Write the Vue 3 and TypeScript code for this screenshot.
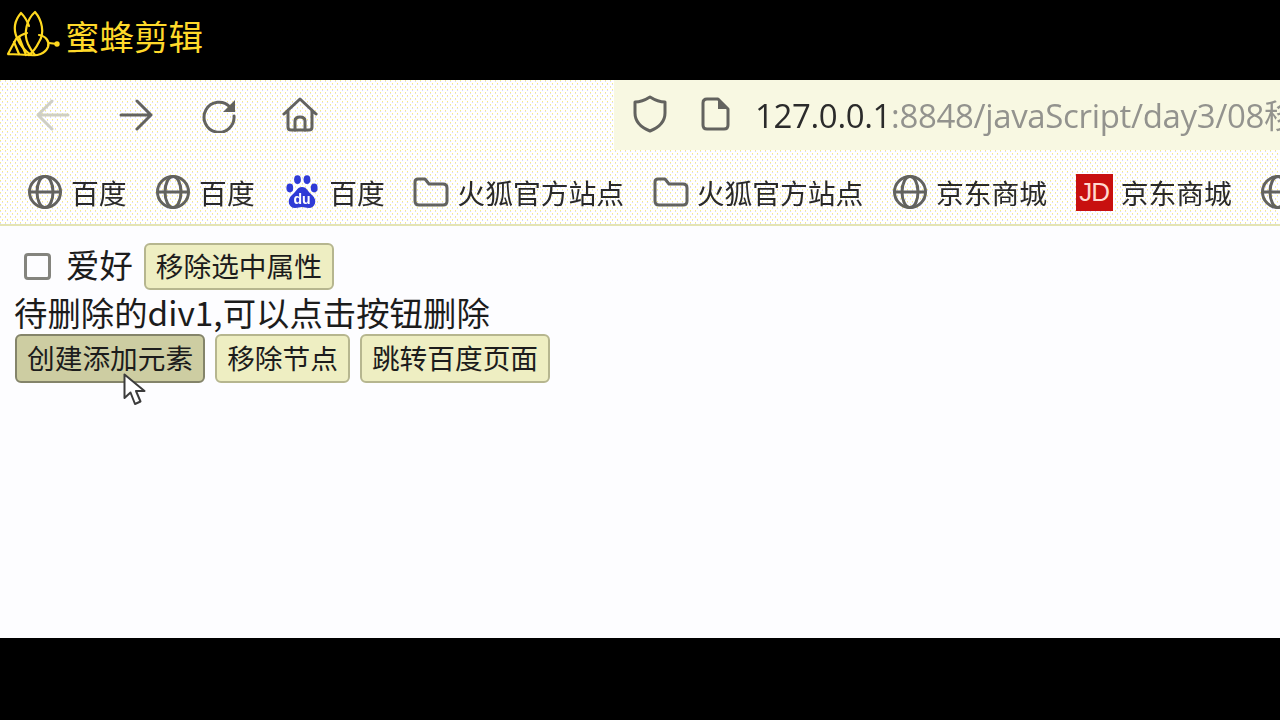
<template>
  <div class="screen">
    <header class="brand">
      <svg class="bee" viewBox="0 0 52 48" width="52" height="48" fill="none" stroke="#ffd91f" stroke-width="2.2" stroke-linejoin="round" stroke-linecap="round">
        <path d="M28 1 C20 8 16 22 21 33 C24 39 26 42 28 44 M28 1 C35 9 38 22 32 31 C29 37 26 41 22 44" />
        <path d="M14 2 C8 9 6 18 10 27 C13 34 18 40 24 44 M14 2 C17 5 20 9 22 15" />
        <path d="M32 24 C39 25 43 31 41 36 C38 43 30 45 24 44" />
        <path d="M1 43 L9 28 C12 25 16 23 20 22 M1 43 C9 43 17 44 24 44" />
        <path d="M7 31 L12 43 M12 26 L19 44" />
        <path d="M42 32 L50 33" />
        <circle cx="50" cy="33" r="1.6" fill="#ffd91f" />
      </svg>
      <span class="brand-name">蜜蜂剪辑</span>
    </header>

    <div class="toolbar">
      <div class="nav-icons">
        <svg class="nav-icon dim" viewBox="0 0 36 36" width="36" height="36">
          <path d="M33 18 H4 M17 4 L3 18 L17 32" />
        </svg>
        <svg class="nav-icon" viewBox="0 0 36 36" width="36" height="36">
          <path d="M3 18 H32 M19 4 L33 18 L19 32" />
        </svg>
        <svg class="nav-icon" viewBox="0 0 36 36" width="36" height="36">
          <path d="M29 10 A15 15 0 1 0 33 19" />
          <path class="solid" d="M34 3 V15 H22 Z" />
        </svg>
        <svg class="nav-icon home" viewBox="0 0 36 36" width="36" height="36">
          <path d="M2 17 L18 2 L34 17 M6 14 V30 Q6 33 9 33 H27 Q30 33 30 30 V14" />
          <path d="M13 33 V24 Q13 20 18 20 Q23 20 23 24 V33" />
        </svg>
      </div>
      <div class="address">
        <svg class="nav-icon shield" viewBox="0 0 34 38" width="34" height="38">
          <path d="M17 2 Q25 7 32 7 V18 Q32 30 17 36 Q2 30 2 18 V7 Q9 7 17 2 Z" />
        </svg>
        <svg class="nav-icon doc" viewBox="0 0 30 34" width="30" height="34">
          <path d="M7 2 H18 L28 12 V28 Q28 32 24 32 H7 Q3 32 3 28 V6 Q3 2 7 2 Z" />
          <path class="solid" d="M18 3 L27 12 H18 Z" />
        </svg>
        <span class="url"><span class="host">127.0.0.1</span>:8848/javaScript/day3/08移除节点</span>
      </div>
    </div>

    <nav class="bookmarks">
      <div v-for="(b, i) in bookmarks" :key="i" class="bookmark">
        <svg v-if="b.icon === 'globe'" class="nav-icon mark" viewBox="0 0 36 36" width="36" height="36">
          <circle cx="18" cy="18" r="15.5" />
          <ellipse cx="18" cy="18" rx="8" ry="15.5" />
          <path d="M3 18 H33" />
        </svg>
        <svg v-else-if="b.icon === 'folder'" class="nav-icon mark folder" viewBox="0 0 36 30" width="36" height="30">
          <path d="M5 2 H12 L16 7 H30 Q34 7 34 11 V24 Q34 28 30 28 H6 Q2 28 2 24 V5 Q2 2 5 2 Z" />
        </svg>
        <svg v-else-if="b.icon === 'baidu'" class="mark paw" viewBox="0 0 32 34" width="32" height="34">
          <ellipse cx="3.8" cy="13" rx="3.4" ry="4.4" />
          <ellipse cx="11.5" cy="4.6" rx="3.4" ry="4.4" />
          <ellipse cx="21" cy="4.6" rx="3.4" ry="4.4" />
          <ellipse cx="28.2" cy="13" rx="3.4" ry="4.4" />
          <path d="M16 12 C21 12 22 17 26 20 C32 25 29 33 23 33 C20 33 18 32 16 32 C14 32 12 33 9 33 C3 33 0 25 6 20 C10 17 11 12 16 12 Z" />
          <text x="16" y="29" text-anchor="middle" class="du">du</text>
        </svg>
        <span v-else class="jd">JD</span>
        <span class="bookmark-name">{{ b.name }}</span>
      </div>
    </nav>

    <main class="page">
      <div class="row hobby">
        <input class="check" type="checkbox" />
        <span class="hobby-label">爱好</span>
        <button class="btn">移除选中属性</button>
      </div>
      <div class="line">待删除的div1,可以点击按钮删除</div>
      <div class="row actions">
        <button class="btn pressed">创建添加元素</button>
        <button class="btn">移除节点</button>
        <button class="btn">跳转百度页面</button>
      </div>
      <svg class="cursor" viewBox="0 0 24 33" width="24" height="33">
        <path d="M1.5 1.5 V25 L7.5 19.5 L12 31 L17.5 28.5 L13 18 H21.5 Z" fill="#fff" stroke="#3c3c3c" stroke-width="2" stroke-linejoin="round" />
      </svg>
    </main>

    <footer class="foot"></footer>
  </div>
</template>

<script setup lang="ts">
interface Bookmark {
  icon: 'globe' | 'folder' | 'baidu' | 'jd'
  name: string
}

const bookmarks: Bookmark[] = [
  { icon: 'globe', name: '百度' },
  { icon: 'globe', name: '百度' },
  { icon: 'baidu', name: '百度' },
  { icon: 'folder', name: '火狐官方站点' },
  { icon: 'folder', name: '火狐官方站点' },
  { icon: 'globe', name: '京东商城' },
  { icon: 'jd', name: '京东商城' },
  { icon: 'globe', name: '京东商城' }
]
</script>

<style>
body {
  background: #000;
}
</style>

<style scoped>
.screen {
  width: 1280px;
  height: 720px;
  display: flex;
  flex-direction: column;
  overflow: hidden;
  background: #000;
  font-family: "Noto Sans CJK SC", "Liberation Sans", sans-serif;
  color: #1c1c1c;
}

.brand {
  height: 80px;
  flex: none;
  display: flex;
  align-items: flex-start;
  box-sizing: border-box;
  padding: 11px 0 0 7px;
  background: #000;
}

.bee {
  flex: none;
  overflow: visible;
}

.brand-name {
  margin: -1px 0 0 6px;
  font-size: 34.5px;
  line-height: 50px;
  font-weight: 400;
  color: #ffd92a;
}

.toolbar {
  height: 70px;
  flex: none;
  display: flex;
  background-color: #fff;
  background-image:
    radial-gradient(circle at 0.5px 0.5px, #fff27a 0.75px, transparent 0.75px),
    radial-gradient(circle at 0.5px 0.5px, #fff27a 0.75px, transparent 0.75px),
    radial-gradient(circle at 0.5px 0.5px, #d4d4ff 0.75px, transparent 0.75px),
    radial-gradient(circle at 0.5px 0.5px, #d4d4ff 0.75px, transparent 0.75px);
  background-size: 5px 6px;
  background-position: 0 0, 2px 3px, 0 1px, 2px 4px;
}

.nav-icons {
  display: flex;
  align-items: center;
  gap: 47px;
  padding: 0 0 0 35px;
}

.home {
  margin-left: -2px;
}

.nav-icon {
  flex: none;
  fill: none;
  stroke: #63635f;
  stroke-width: 3;
  stroke-linecap: round;
  stroke-linejoin: round;
  filter: blur(0.4px);
}

.nav-icon .solid {
  fill: #63635f;
  stroke: none;
}

.nav-icon.dim {
  stroke: #cfcfc4;
}

.address {
  margin-left: auto;
  width: 666px;
  display: flex;
  align-items: center;
  box-sizing: border-box;
  padding-left: 19px;
  overflow: hidden;
  white-space: nowrap;
  background: #f8f8e2;
}

.shield {
  margin-top: -2px;
}

.doc {
  margin: -2px 0 0 33px;
}

.url {
  margin: -3px 0 0 25px;
  font-family: "Open Sans", "Noto Sans CJK SC", sans-serif;
  font-size: 33px;
  letter-spacing: -0.35px;
  color: #93938e;
  filter: blur(0.4px);
}

.host {
  color: #2b2b2b;
}

.bookmarks {
  height: 76px;
  flex: none;
  box-sizing: border-box;
  display: flex;
  align-items: center;
  gap: 28.5px;
  padding: 9px 0 0 27px;
  white-space: nowrap;
  background-color: #fff;
  background-image:
    radial-gradient(circle at 0.5px 0.5px, #fff27a 0.75px, transparent 0.75px),
    radial-gradient(circle at 0.5px 0.5px, #fff27a 0.75px, transparent 0.75px),
    radial-gradient(circle at 0.5px 0.5px, #d4d4ff 0.75px, transparent 0.75px),
    radial-gradient(circle at 0.5px 0.5px, #d4d4ff 0.75px, transparent 0.75px);
  background-size: 5px 6px;
  background-position: 0 0, 2px 3px, 0 1px, 2px 4px;
  border-bottom: 2px solid #e4e4b4;
}

.bookmark {
  flex: none;
  display: flex;
  align-items: center;
  gap: 8px;
}

.mark {
  flex: none;
}

.paw {
  margin-left: 3px;
  margin-right: 3px;
  fill: #2f3bd6;
  filter: blur(0.4px);
}

.du {
  fill: #fff;
  font-family: "Liberation Sans", sans-serif;
  font-size: 14px;
  font-weight: 700;
}

.jd {
  width: 37px;
  height: 37px;
  flex: none;
  margin-top: 2px;
  display: flex;
  align-items: center;
  justify-content: center;
  background: #c8100f;
  color: #ffd9d0;
  font-family: "Liberation Sans", sans-serif;
  font-size: 26px;
  letter-spacing: -1px;
}

.bookmark-name {
  font-size: 27.8px;
  line-height: 40px;
  color: #2a2a2a;
  filter: blur(0.3px);
}

.page {
  flex: 1;
  position: relative;
  box-sizing: border-box;
  padding: 17px 0 0 14px;
  background: #fdfdff;
}

.row {
  display: flex;
  align-items: center;
}

.check {
  appearance: none;
  width: 27px;
  height: 27px;
  box-sizing: border-box;
  margin: 0 0 0 10px;
  border: 3px solid #84847e;
  border-radius: 4px;
  background: #fdfdff;
}

.hobby-label {
  margin: -5px 11px 0 15px;
  font-size: 33.4px;
  line-height: 46px;
}

.line {
  margin-top: -1px;
  font-size: 33.4px;
  line-height: 45px;
  white-space: nowrap;
}

.actions {
  gap: 10px;
  padding-left: 1px;
}

.btn {
  height: 47px;
  box-sizing: border-box;
  padding: 0 10px 2px;
  border: 2px solid #b6b68f;
  border-radius: 6px;
  font-family: inherit;
  font-size: 27.7px;
  line-height: 1;
  color: #1c1c1c;
  white-space: nowrap;
  background: #eeeec2;
}

.actions .btn {
  height: 49px;
  padding-bottom: 1px;
}

.actions .pressed {
  border-color: #84846a;
  background: #cdcda2;
}

.cursor {
  position: absolute;
  left: 123px;
  top: 147px;
}

.foot {
  height: 82px;
  flex: none;
  background: #000;
}
</style>
